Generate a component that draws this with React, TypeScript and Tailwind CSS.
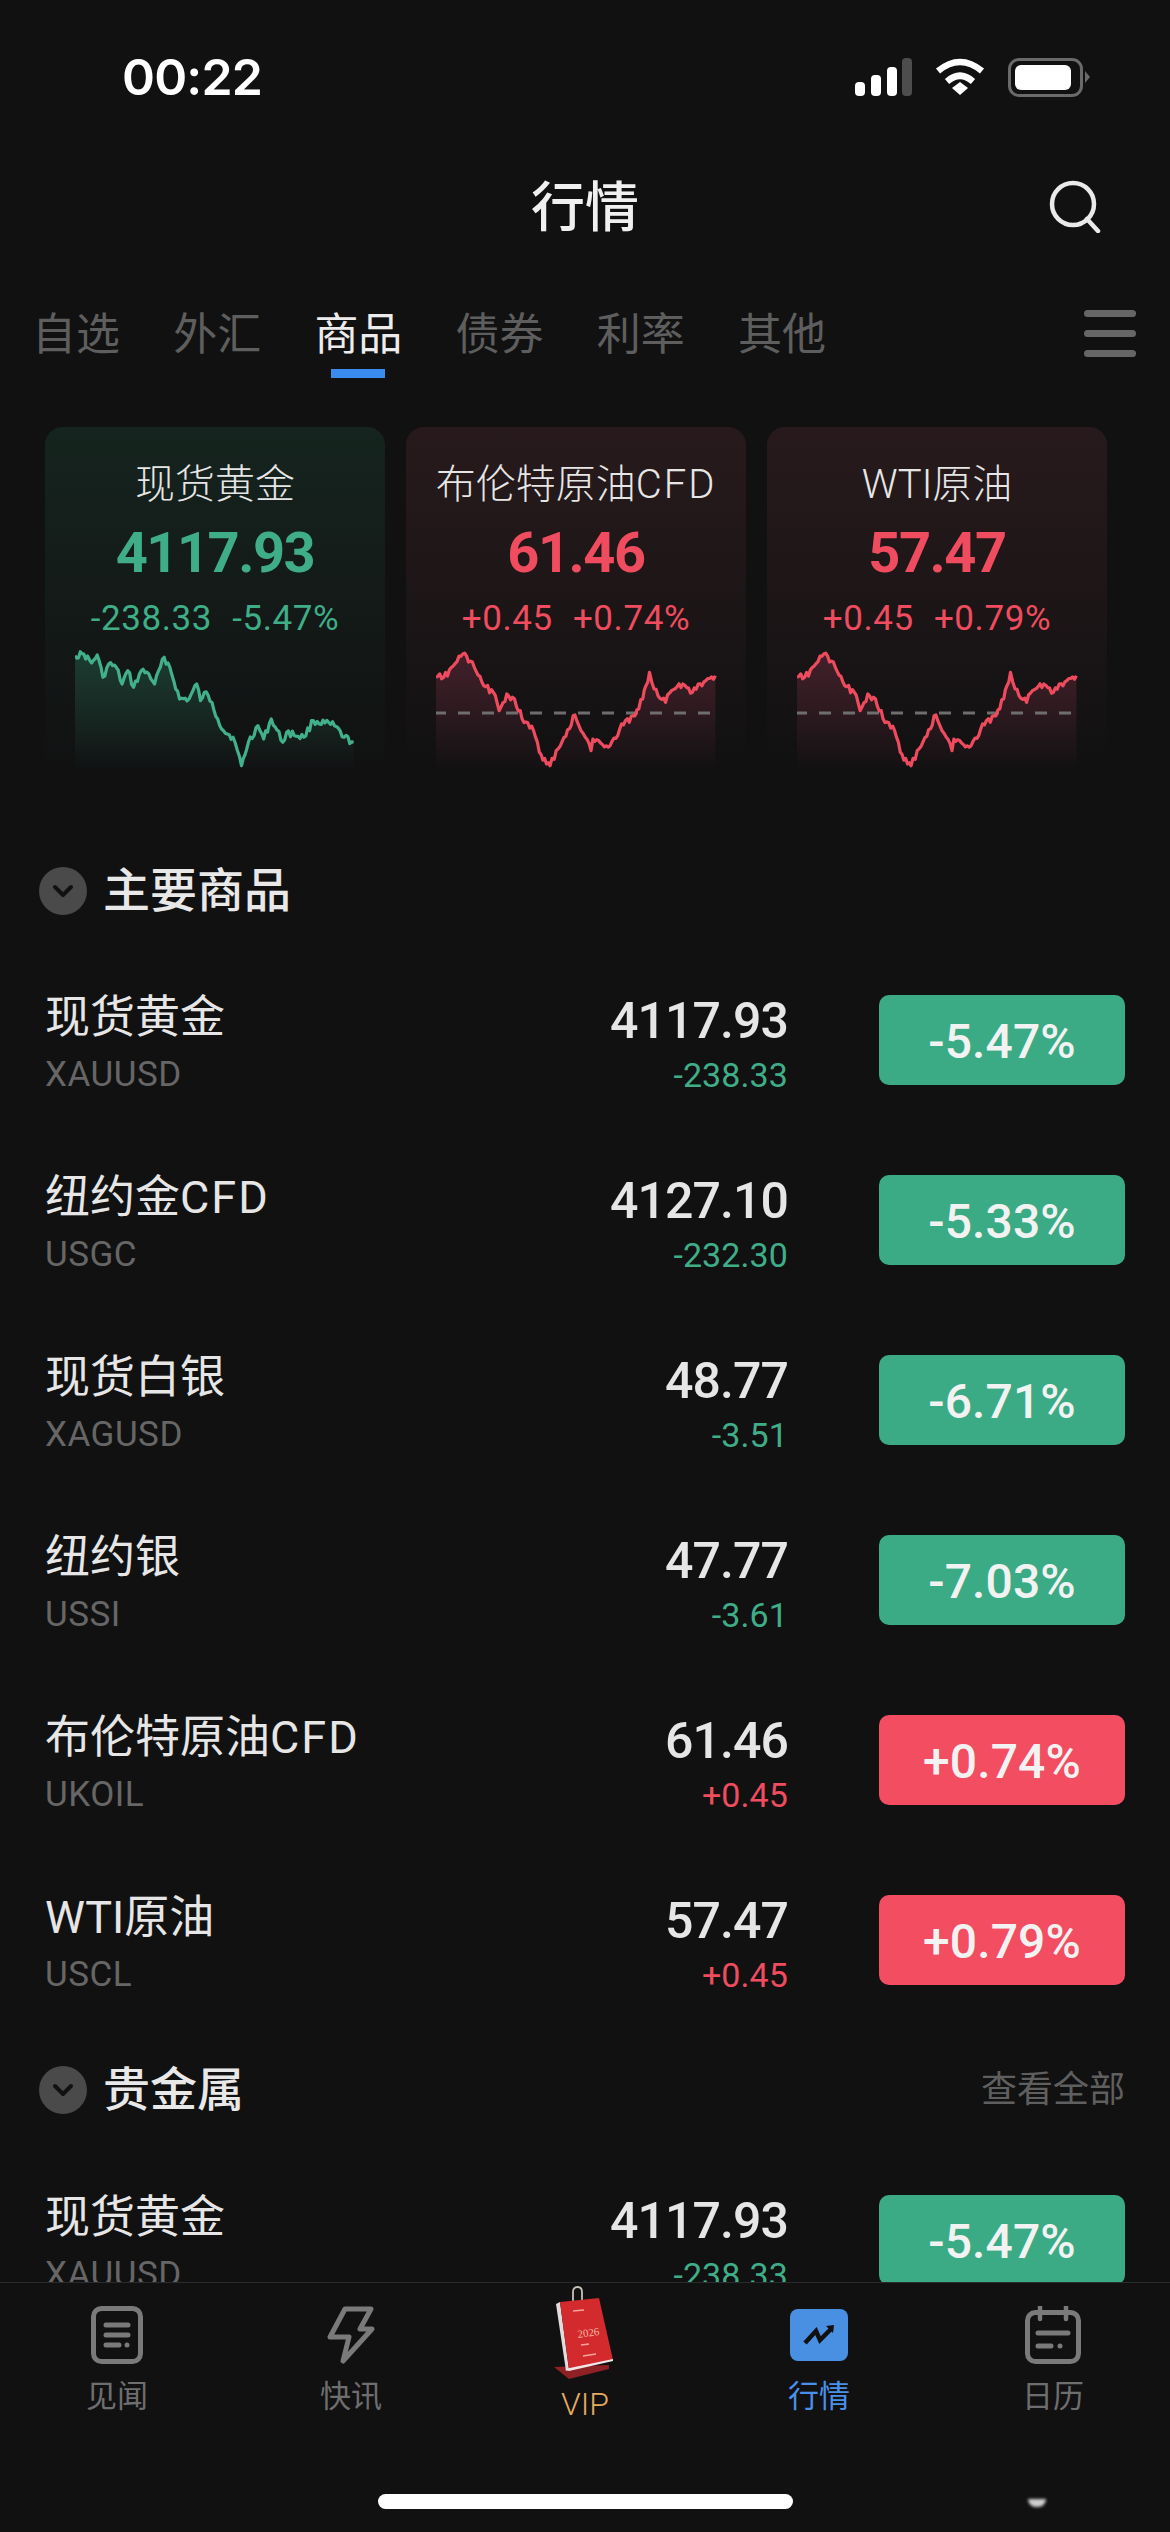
const CJK = "font-['Roboto','Noto_Sans_CJK_SC',sans-serif]";

type P = [number, number];

const goldKeys: P[] = [[197,740],[220,735],[240,762],[255,738],[270,805],[285,765],[305,775],[320,825],[335,785],[350,835],[370,785],[390,795],[405,825],[430,745],[445,775],[470,870],[495,870],[515,825],[525,875],[535,850],[555,880],[570,930],[585,965],[610,985],[632,1070],[650,1000],[675,950],[690,990],[710,930],[740,1000],[750,970],[795,985],[820,935],[875,950],[900,985],[925,1000]];
const oilKeys: P[] = [[595,805],[615,805],[665,735],[695,775],[720,830],[745,850],[760,905],[780,855],[800,870],[820,930],[850,965],[865,1030],[893,1070],[920,1010],[958,918],[985,985],[1000,1025],[1005,990],[1050,1010],[1075,960],[1110,920],[1135,870],[1153,790],[1165,840],[1195,880],[1210,845],[1240,825],[1265,850],[1300,815],[1325,800]];

function build(keys: P[], seed: number, step: number): P[] {
  const x0 = keys[0][0];
  let s = seed;
  const rnd = () => {
    s = (s * 9301 + 49297) % 233280;
    return s / 233280 - 0.5;
  };
  const out: P[] = [];
  for (let i = 0; i < keys.length - 1; i++) {
    const [ax, ay] = keys[i];
    const [bx, by] = keys[i + 1];
    const n = Math.max(1, Math.round((bx - ax) / step));
    for (let k = 0; k < n; k++) {
      const t = k / n;
      const j = k === 0 ? 0 : rnd() * 7;
      out.push([(ax + (bx - ax) * t - x0) / 2.613, (ay + (by - ay) * t) / 3 + 410 - 650 + j]);
    }
  }
  const l = keys[keys.length - 1];
  out.push([(l[0] - x0) / 2.613, l[1] / 3 + 410 - 650]);
  return out;
}

const goldPts = build(goldKeys, 17, 5);
const oilPts = build(oilKeys, 53, 5);

function Spark({ pts, color, id, top, dashed }: { pts: P[]; color: string; id: string; top: string; dashed?: boolean }) {
  const line = pts.map((p) => `${p[0].toFixed(1)},${p[1].toFixed(1)}`).join(" ");
  const w = pts[pts.length - 1][0];
  const area = `M0,122 L${line.split(" ").join(" L")} L${w.toFixed(1)},122 Z`;
  return (
    <svg width="290" height="124" viewBox="0 0 290 124" className="block">
      <defs>
        <linearGradient id={id} x1="0" y1="0" x2="0" y2="1">
          <stop offset="0" stopColor={top} />
          <stop offset="1" stopColor={top} stopOpacity="0" />
        </linearGradient>
      </defs>
      <path d={area} fill={`url(#${id})`} />
      {dashed && <line x1="-2" y1="64" x2="280" y2="64" stroke="#6e6e6e" strokeWidth="3" strokeDasharray="12 12" />}
      <polyline points={line} fill="none" stroke={color} strokeWidth="3.2" strokeLinejoin="round" />
    </svg>
  );
}

function Name({ text }: { text: string }) {
  const i = text.indexOf("CFD");
  if (i < 0) return <>{text}</>;
  return (
    <>
      {text.slice(0, i)}
      <span className="tracking-[2px]">CFD</span>
    </>
  );
}

function Card({ name, value, a, b, up, pts, id }: { name: string; value: string; a: string; b: string; up: boolean; pts: P[]; id: string }) {
  return (
    <div className={`w-[340px] h-[343px] rounded-[18px] flex flex-col items-center bg-gradient-to-b ${up ? "from-[#281a1c] to-[#111112]" : "from-[#15241e] to-[#111112]"}`}>
      <div className="h-[44px] mt-[36px] flex items-center text-[40px] leading-[44px] text-[#e6e6e6] font-light whitespace-nowrap"><Name text={name} /></div>
      <div className={`h-[48px] mt-[22px] flex items-center text-[56px] font-bold tracking-[-1.5px] ${up ? "text-[#f04c5f]" : "text-[#3fae88]"}`}>{value}</div>
      <div className={`h-[30px] mt-[27px] flex gap-[20px] items-center text-[35px] tracking-[0.6px] ${up ? "text-[#f04c5f]" : "text-[#3fae88]"}`}>
        <span>{a}</span>
        <span>{b}</span>
      </div>
      <div className="mt-[15px] w-[280px] self-start ml-[30px]">
        <Spark pts={pts} color={up ? "#ee4c5e" : "#43b08c"} id={id} top={up ? "#43202a" : "#1c3d32"} dashed={up} />
      </div>
    </div>
  );
}

function Row({ name, code, value, change, pct, up }: { name: string; code: string; value: string; change: string; pct: string; up: boolean }) {
  return (
    <div className="h-[180px] shrink-0 flex items-center pl-[45px] pr-[45px]">
      <div className="flex-1 flex flex-col h-full pt-[40px]">
        <div className="h-[56px] flex items-center text-[45px] text-[#e6e6e6] font-normal whitespace-nowrap"><Name text={name} /></div>
        <div className="h-[44px] mt-[7px] flex items-center text-[35px] text-[#666666] tracking-[0.5px]">{code}</div>
      </div>
      <div className="flex flex-col items-end h-full pt-[43px] mr-[91px]">
        <div className="h-[56px] flex items-center text-[50px] font-medium text-[#e6e6e6] tracking-[-0.9px]">{value}</div>
        <div className={`h-[44px] mt-[4px] flex items-center text-[34px] tracking-[0.1px] ${up ? "text-[#f04c5f]" : "text-[#3fae88]"}`}>{change}</div>
      </div>
      <div className={`w-[246px] h-[90px] rounded-[10px] flex items-center justify-center pt-[3px] text-[48px] font-medium tracking-[0.1px] text-[#f2f2f2] ${up ? "bg-[#f24d60]" : "bg-[#3bab85]"}`}>{pct}</div>
    </div>
  );
}

function Section({ title, more, h }: { title: string; more?: string; h: string }) {
  return (
    <div className={`${h} shrink-0 flex items-center pl-[39px] pr-[45px]`}>
      <div className="w-[48px] h-[48px] rounded-full bg-[#4a4a4a] flex items-center justify-center">
        <svg width="22" height="14" viewBox="0 0 22 14"><path d="M3 3l8 8 8-8" fill="none" stroke="#111112" strokeWidth="4" strokeLinecap="round" strokeLinejoin="round" /></svg>
      </div>
      <div className="ml-[16px] text-[47px] text-[#e8e8e8] font-medium flex-1">{title}</div>
      {more && <div className="text-[36px] text-[#5f5f5f]">{more}</div>}
    </div>
  );
}

function NavItem({ label, active, children }: { label: string; active?: boolean; children: React.ReactNode }) {
  return (
    <div className="flex flex-col items-center">
      <div className="h-[58px] mt-[23px] flex items-center justify-center">{children}</div>
      <div className={`mt-[13px] h-[40px] flex items-center text-[31px] ${active ? "text-[#4a90ea]" : "text-[#6e6e6e]"}`}>{label}</div>
    </div>
  );
}

export default function App() {
  const rows = [
    ["现货黄金", "XAUUSD", "4117.93", "-238.33", "-5.47%", false],
    ["纽约金CFD", "USGC", "4127.10", "-232.30", "-5.33%", false],
    ["现货白银", "XAGUSD", "48.77", "-3.51", "-6.71%", false],
    ["纽约银", "USSI", "47.77", "-3.61", "-7.03%", false],
    ["布伦特原油CFD", "UKOIL", "61.46", "+0.45", "+0.74%", true],
    ["WTI原油", "USCL", "57.47", "+0.45", "+0.79%", true],
  ] as const;
  const tabs = ["自选", "外汇", "商品", "债券", "利率", "其他"];
  return (
    <div className={`w-[1170px] h-[2532px] overflow-hidden bg-[#111112] flex flex-col relative ${CJK}`}>
      {/* status bar */}
      <div className="h-[154px] shrink-0 flex items-center justify-between pl-[122px] pr-[79px]">
        <div className="text-[50px] font-semibold text-white font-['Inter',sans-serif] tracking-[-0.8px]">00:22</div>
        <div className="flex items-center">
          <svg width="57" height="38" viewBox="0 0 57 38">
            <rect x="0" y="24" width="10" height="14" rx="4" fill="#fff" />
            <rect x="16" y="17" width="10" height="21" rx="4" fill="#fff" />
            <rect x="32" y="9" width="10" height="29" rx="4" fill="#fff" />
            <rect x="47" y="0" width="10" height="38" rx="4" fill="#4d4d4d" />
          </svg>
          <svg width="50" height="38" viewBox="0 0 50 38" className="ml-[23px]">
            <path d="M17 30L25 24L33 30L25 37Z" fill="#fff" />
            <path d="M3 13Q25 -5 47 13" fill="none" stroke="#fff" strokeWidth="6.5" />
            <path d="M12 23.5Q25 12 38 23.5" fill="none" stroke="#fff" strokeWidth="6.5" />
          </svg>
          <div className="ml-[23px] w-[75px] h-[39px] rounded-[11px] border-[3px] border-[#6a6a6a] pl-[4px] pr-[9px] py-[4px]">
            <div className="w-full h-full rounded-[6px] bg-white" />
          </div>
          <svg width="6" height="12" viewBox="0 0 6 12" className="ml-[2px]"><path d="M0 0L5 6L0 12Z" fill="#6a6a6a" /></svg>
        </div>
      </div>
      {/* title */}
      <div className="h-[104px] shrink-0 flex items-center justify-center relative pt-[5px]">
        <div className="text-[54px] font-medium text-[#f0f0f0]">行情</div>
        <svg width="54" height="54" viewBox="0 0 54 54" className="absolute right-[68px] top-[25px]">
          <circle cx="25" cy="25" r="21" fill="none" stroke="#eaeaea" strokeWidth="4.5" />
          <path d="M39 40l11 12" stroke="#eaeaea" strokeWidth="4.5" strokeLinecap="round" />
        </svg>
      </div>
      {/* tabs */}
      <div className="h-[124px] shrink-0 flex items-start pl-[32px] pr-[34px] pt-[50px]">
        <div className="flex gap-[53.2px] flex-1">
          {tabs.map((t, i) => (
            <div key={t} className="relative h-[54px] flex items-center">
              <span className={`text-[44px] leading-[54px] ${i === 2 ? "text-[#ececec]" : "text-[#5e5e5e]"}`}>{t}</span>
              {i === 2 && <div className="absolute left-[17px] top-[61px] w-[54px] h-[9px] bg-[#3a8bee]" />}
            </div>
          ))}
        </div>
        <div className="flex flex-col gap-[13px] mt-[2px]">
          <div className="w-[52px] h-[7px] rounded-full bg-[#666666]" />
          <div className="w-[52px] h-[7px] rounded-full bg-[#666666]" />
          <div className="w-[52px] h-[7px] rounded-full bg-[#666666]" />
        </div>
      </div>
      {/* scrolling area */}
      <div className="flex-1 min-h-0 overflow-hidden flex flex-col pt-[45px]">
        <div className="shrink-0 flex gap-[21px] pl-[45px]">
          <Card name="现货黄金" value="4117.93" a="-238.33" b="-5.47%" up={false} pts={goldPts} id="g1" />
          <Card name="布伦特原油CFD" value="61.46" a="+0.45" b="+0.74%" up pts={oilPts} id="g2" />
          <Card name="WTI原油" value="57.47" a="+0.45" b="+0.79%" up pts={oilPts} id="g3" />
        </div>
        <div className="h-[62px] shrink-0" />
        <Section title="主要商品" h="h-[118px]" />
        {rows.map((r) => (
          <Row key={r[0]} name={r[0]} code={r[1]} value={r[2]} change={r[3]} pct={r[4]} up={r[5]} />
        ))}
        <Section title="贵金属" more="查看全部" h="h-[120px]" />
        <Row name="现货黄金" code="XAUUSD" value="4117.93" change="-238.33" pct="-5.47%" up={false} />
      </div>
      {/* bottom nav */}
      <div className="h-[250px] shrink-0 border-t border-[#2a2b2c] bg-[#111112] relative">
        <div className="grid grid-cols-5">
          <NavItem label="见闻">
            <svg width="52" height="58" viewBox="0 0 52 58" fill="none" stroke="#7a7a7a">
              <rect x="2.5" y="2.5" width="47" height="53" rx="8" strokeWidth="5" />
              <path d="M15 19h22M15 29h22M15 39h13" strokeWidth="5" strokeLinecap="round" />
              <circle cx="36" cy="39" r="2.5" fill="#7a7a7a" stroke="none" />
            </svg>
          </NavItem>
          <NavItem label="快讯">
            <svg width="48" height="58" viewBox="0 0 48 58" fill="none">
              <path d="M18 3H44L33 23H45L16 55L22 31H3Z" stroke="#7a7a7a" strokeWidth="5" strokeLinejoin="round" />
            </svg>
          </NavItem>
          <div className="flex flex-col items-center relative">
            <div className="h-[94px] mt-[3px] flex items-start justify-center">
              <svg width="62" height="94" viewBox="0 0 62 94">
                <path d="M19 15V6q0-5 4.5-5T28 6v8" fill="none" stroke="#c9c2b8" strokeWidth="1.8" />
                <path d="M0 81L55 79V83L15 93Z" fill="#8f2025" />
                <path d="M2 18L6 16L15 84L12 85Z" fill="#e3dcdc" />
                <path d="M6 16L45 12L59 74L15 84Z" fill="#d22a2d" />
                <path d="M11 83L59 73L59 75L15 85Z" fill="#efe6e6" />
                <text x="24" y="52" fontSize="11" fill="#f2b9a2" transform="rotate(-8 24 52)" fontFamily="Liberation Serif, serif">2026</text>
                <path d="M19 25l11-1M27 59l8-1M29 70l13-2" stroke="#f3a49c" strokeWidth="1.6" />
              </svg>
            </div>
            <div className="mt-[4px] h-[40px] flex items-center text-[32px] font-light text-[#e3ab5e]">VIP</div>
          </div>
          <NavItem label="行情" active>
            <div className="w-[58px] h-[52px] rounded-[8px] bg-[#4a90e2] flex items-center justify-center">
              <svg width="34" height="24" viewBox="0 0 34 24" fill="none">
                <path d="M3 20L14 8L18 17L30 5" stroke="#111112" strokeWidth="4.5" />
                <path d="M24 3l8-1-1 8z" fill="#111112" />
              </svg>
            </div>
          </NavItem>
          <NavItem label="日历">
            <svg width="56" height="58" viewBox="0 0 56 58" fill="none" stroke="#7a7a7a">
              <rect x="2.5" y="6.5" width="51" height="49" rx="8" strokeWidth="5" />
              <path d="M15 1v12M41 1v12" strokeWidth="4.5" strokeLinecap="round" />
              <path d="M13 27h30M13 40h13" strokeWidth="5" strokeLinecap="round" />
              <circle cx="35" cy="40" r="2.5" fill="#7a7a7a" stroke="none" />
            </svg>
          </NavItem>
        </div>
        <div className="absolute left-[378px] top-[211px] w-[415px] h-[15px] rounded-full bg-white" />
        <div className="absolute left-[1028px] top-[216px] w-[18px] h-[8px] rounded-b-full bg-[#cfcfcf] blur-[1.5px]" />
      </div>
    </div>
  );
}
